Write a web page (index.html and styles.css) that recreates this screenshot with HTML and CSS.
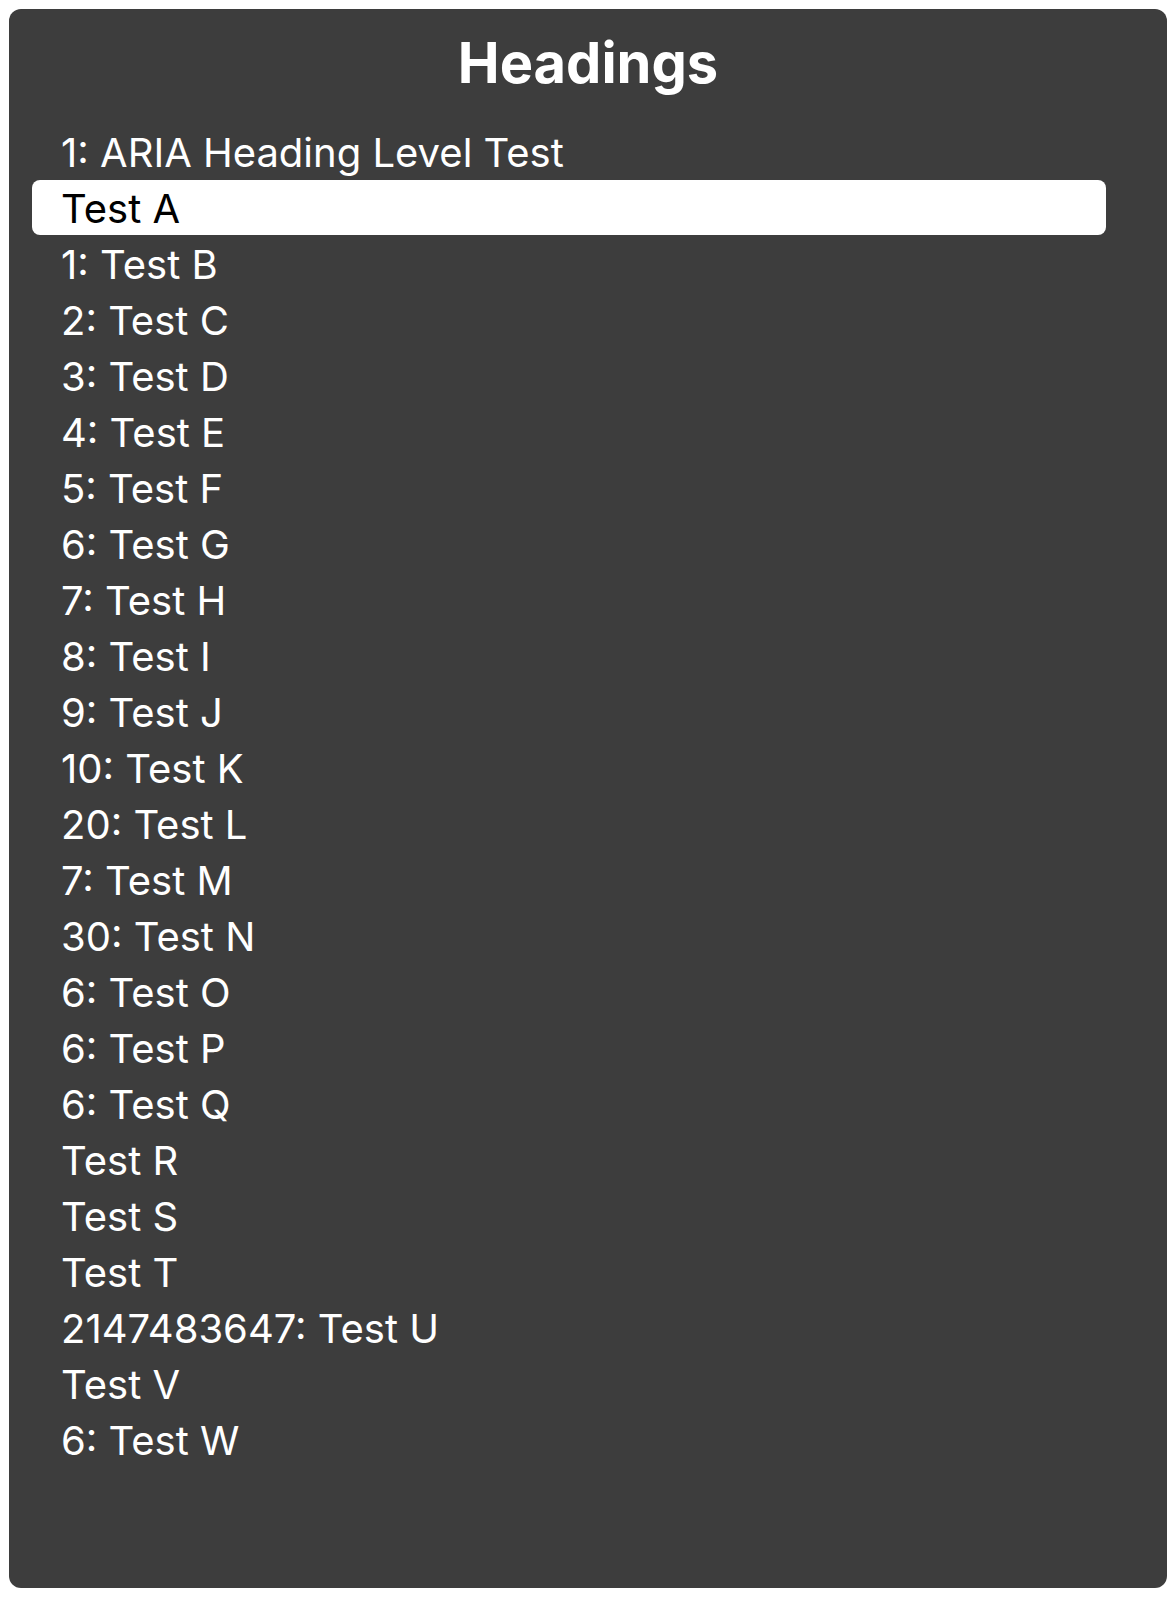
FILE: index.html
```html
<!DOCTYPE html>
<html lang="en">
<head>
    <meta charset="UTF-8">
    <title>Headings</title>
    <link rel="stylesheet" href="styles.css">
</head>
<body>
<div class="rotor">
    <h1 class="rotor-title">Headings</h1>
    <ul class="rotor-list">
        <li>1: ARIA Heading Level Test</li>
        <li class="selected">Test A</li>
        <li>1: Test B</li>
        <li>2: Test C</li>
        <li>3: Test D</li>
        <li>4: Test E</li>
        <li>5: Test F</li>
        <li>6: Test G</li>
        <li>7: Test H</li>
        <li>8: Test I</li>
        <li>9: Test J</li>
        <li>10: Test K</li>
        <li>20: Test L</li>
        <li>7: Test M</li>
        <li>30: Test N</li>
        <li>6: Test O</li>
        <li>6: Test P</li>
        <li>6: Test Q</li>
        <li>Test R</li>
        <li>Test S</li>
        <li>Test T</li>
        <li>2147483647: Test U</li>
        <li>Test V</li>
        <li>6: Test W</li>
    </ul>
</div>
</body>
</html>
```

FILE: styles.css
```css
* {
    margin: 0;
    padding: 0;
    box-sizing: border-box;
}

body {
    font-family: Inter, "Noto Sans", sans-serif;
    background: #fff;
    padding: 9px;
}

.rotor {
    width: 1158px;
    height: 1579px;
    background: #3d3d3d;
    border-radius: 12px;
    padding-top: 20px;
    color: #fff;
}

.rotor-title {
    font-size: 56px;
    font-weight: 700;
    line-height: 68px;
    text-align: center;
    margin-bottom: 27px;
}

.rotor-list {
    list-style: none;
    padding: 0 61px 0 23px;
}

.rotor-list li {
    font-size: 40px;
    line-height: 58px;
    height: 56px;
    padding-left: 29px;
    white-space: nowrap;
}

.rotor-list li.selected {
    background: #fff;
    color: #000;
    border-radius: 8px;
    height: 55px;
    margin-bottom: 1px;
}
```
